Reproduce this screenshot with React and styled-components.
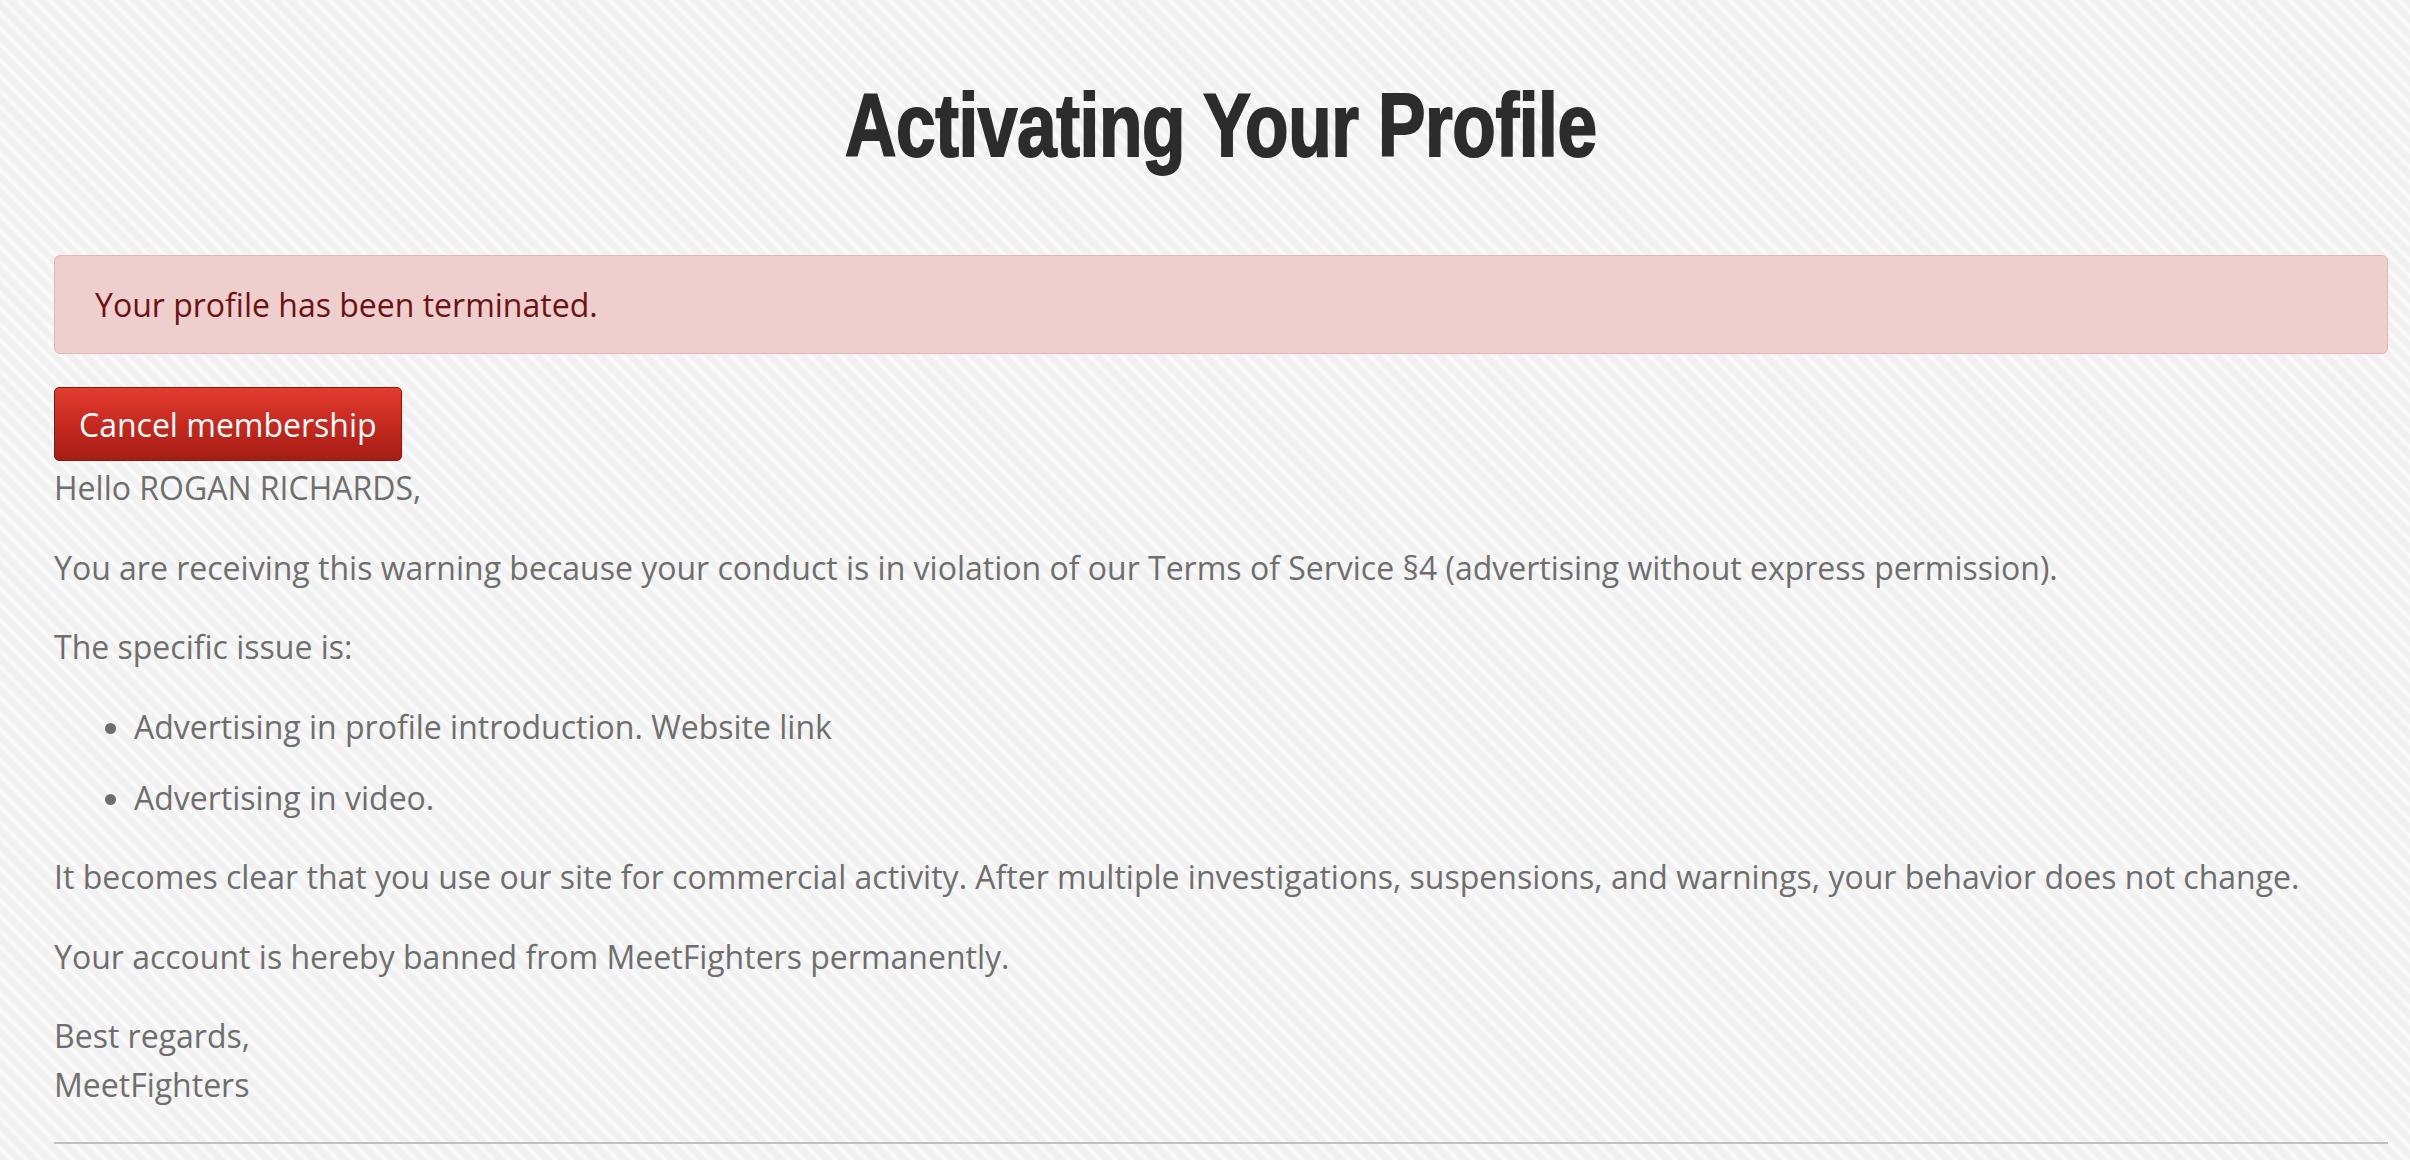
import styled, { createGlobalStyle } from "styled-components";

const GlobalStyle = createGlobalStyle`
  html, body {
    margin: 0;
    padding: 0;
  }
  body {
    min-height: 1160px;
    font-family: "Open Sans", "Liberation Sans", sans-serif;
    color: #6e6e6e;
    background-color: #f4f4f4;
    background-image: repeating-linear-gradient(
      45deg,
      #f1f1f1 0px,
      #f1f1f1 5px,
      #fafafa 7px,
      #fafafa 9px,
      #f1f1f1 11px
    );
  }
`;

const Page = styled.div`
  margin: 0 22px 0 54px;
  padding-top: 81px;
`;

const TitleRow = styled.div`
  display: flex;
  justify-content: center;
  margin-bottom: 85px;
`;

const Title = styled.h1`
  display: inline-block;
  margin: 0;
  font-family: "Liberation Sans", Arial, sans-serif;
  font-weight: 700;
  font-size: 89px;
  line-height: 89px;
  color: #2c2c2c;
  -webkit-text-stroke: 2px #2c2c2c;
  letter-spacing: -0.5px;
  transform: scaleX(0.8);
`;

const Alert = styled.div`
  box-sizing: border-box;
  height: 99px;
  display: flex;
  align-items: center;
  padding: 0 40px;
  border: 1.5px solid #e7b3b3;
  border-radius: 6px;
  background: #eecfce;
  color: #6c1212;
  font-size: 32px;
  line-height: 49px;
  margin-bottom: 33px;
`;

const DangerButton = styled.button`
  box-sizing: border-box;
  display: block;
  height: 74px;
  padding: 0 24px;
  margin-bottom: 2px;
  border: 1px solid #8b1810;
  border-radius: 5px;
  background: linear-gradient(to bottom, #e33c2f 0%, #c62a1f 50%, #a51d14 100%);
  color: #ffffff;
  font-family: "Open Sans", "Liberation Sans", sans-serif;
  font-size: 32px;
  cursor: pointer;
`;

const Body = styled.div`
  font-size: 32px;
  line-height: 49px;
  color: #6e6e6e;
`;

const Para = styled.p`
  margin: 0 0 ${(props) => (props.last ? "0" : "30.5px")};
`;

const IssueList = styled.ul`
  margin: 0 0 30.5px;
  padding-left: 80px;

  li + li {
    margin-top: 22px;
  }
`;

const Divider = styled.hr`
  margin: 33px 0 0;
  border: 0;
  border-top: 2px solid #c0c0c0;
`;

export default function App() {
  return (
    <>
      <GlobalStyle />
      <Page>
        <TitleRow>
          <Title>Activating Your Profile</Title>
        </TitleRow>
        <Alert>Your profile has been terminated.</Alert>
        <DangerButton>Cancel membership</DangerButton>
        <Body>
          <Para>Hello ROGAN RICHARDS,</Para>
          <Para>
            You are receiving this warning because your conduct is in violation of our Terms of
            Service §4 (advertising without express permission).
          </Para>
          <Para>The specific issue is:</Para>
          <IssueList>
            <li>Advertising in profile introduction. Website link</li>
            <li>Advertising in video.</li>
          </IssueList>
          <Para>
            It becomes clear that you use our site for commercial activity. After multiple
            investigations, suspensions, and warnings, your behavior does not change.
          </Para>
          <Para>Your account is hereby banned from MeetFighters permanently.</Para>
          <Para last>
            Best regards,
            <br />
            MeetFighters
          </Para>
        </Body>
        <Divider />
      </Page>
    </>
  );
}
